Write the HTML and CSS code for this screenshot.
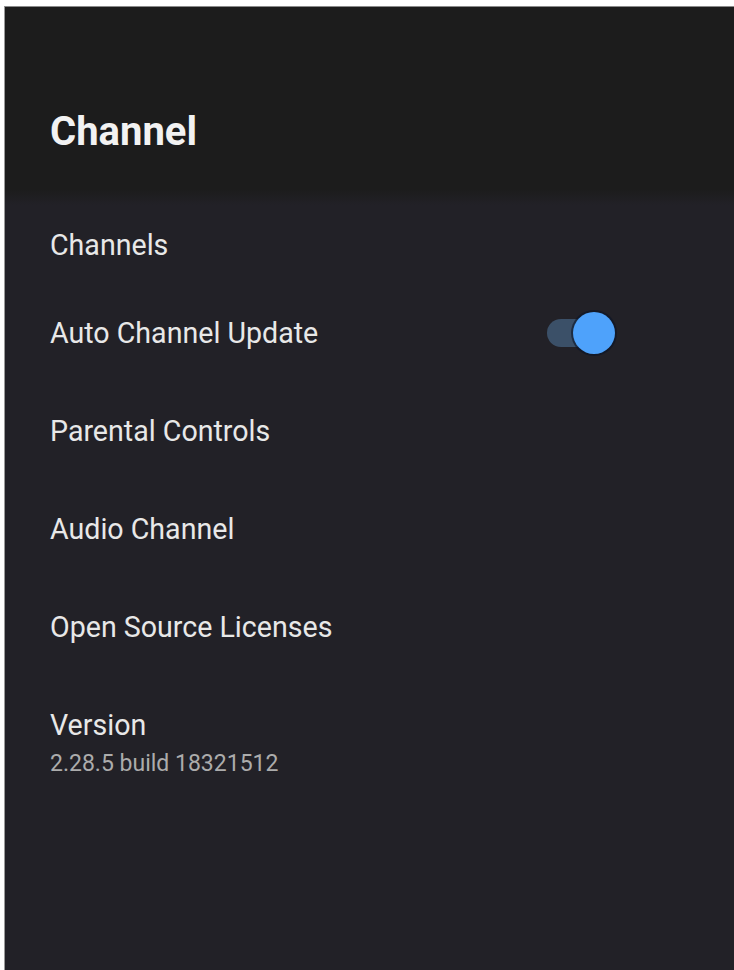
FILE: index.html
```html
<!DOCTYPE html>
<html lang="en">
<head>
  <meta charset="UTF-8">
  <title>Channel</title>
  <link rel="stylesheet" href="styles.css">
</head>
<body>
  <div class="panel">
    <div class="panel-header">
      <h1 class="panel-title">Channel</h1>
    </div>
    <div class="menu">
      <div class="menu-item first">Channels</div>
      <div class="menu-item">
        <span>Auto Channel Update</span>
        <span class="switch on"><span class="switch-thumb"></span></span>
      </div>
      <div class="menu-item">Parental Controls</div>
      <div class="menu-item">Audio Channel</div>
      <div class="menu-item">Open Source Licenses</div>
      <div class="menu-item version">
        <div>Version</div>
        <div class="menu-sub">2.28.5 build 18321512</div>
      </div>
    </div>
  </div>
</body>
</html>
```

FILE: styles.css
```css
:root {
  --header-bg: #1c1c1c;
  --panel-bg: #222127;
  --text: #e8e8e8;
  --text-dim: #acacac;
  --accent: #4ea2fb;
  --track: #3b5068;
}

html, body {
  margin: 0;
  height: 100%;
}

body {
  background: #ffffff;
  font-family: Roboto, 'Liberation Sans', sans-serif;
  padding: 6px 0 0 4px;
  box-sizing: border-box;
  overflow: hidden;
}

.panel {
  height: 100%;
  background: var(--panel-bg);
  border-top: 1px solid #8a8a8a;
  border-left: 1px solid #9a9a9a;
  display: flex;
  flex-direction: column;
}

.panel-header {
  height: 198px;
  background: linear-gradient(to bottom, var(--header-bg) 0, var(--header-bg) 182px, var(--panel-bg) 198px);
  padding-left: 45px;
  box-sizing: border-box;
}

.panel-title {
  margin: 0;
  padding-top: 101px;
  font-size: 40px;
  line-height: 47px;
  font-weight: 700;
  color: #f2f2f2;
}

.menu {
  padding: 1px 125px 0 45px;
}

.menu-item {
  height: 98px;
  display: flex;
  align-items: center;
  justify-content: space-between;
  font-size: 28.6px;
  color: var(--text);
}

.menu-item.first {
  height: 78px;
}

.menu-item.version {
  display: block;
  height: auto;
  padding-top: 33px;
  line-height: 33px;
}

.menu-sub {
  margin-top: 8px;
  font-size: 23px;
  line-height: 27px;
  color: var(--text-dim);
}

.switch {
  position: relative;
  width: 62px;
  height: 28px;
  border-radius: 14px;
  background: var(--track);
}

.switch-thumb {
  position: absolute;
  right: -6px;
  top: -7px;
  width: 42px;
  height: 42px;
  border-radius: 50%;
  background: var(--accent);
  box-shadow: 0 0 0 2px rgba(10, 20, 40, 0.6);
}
```
